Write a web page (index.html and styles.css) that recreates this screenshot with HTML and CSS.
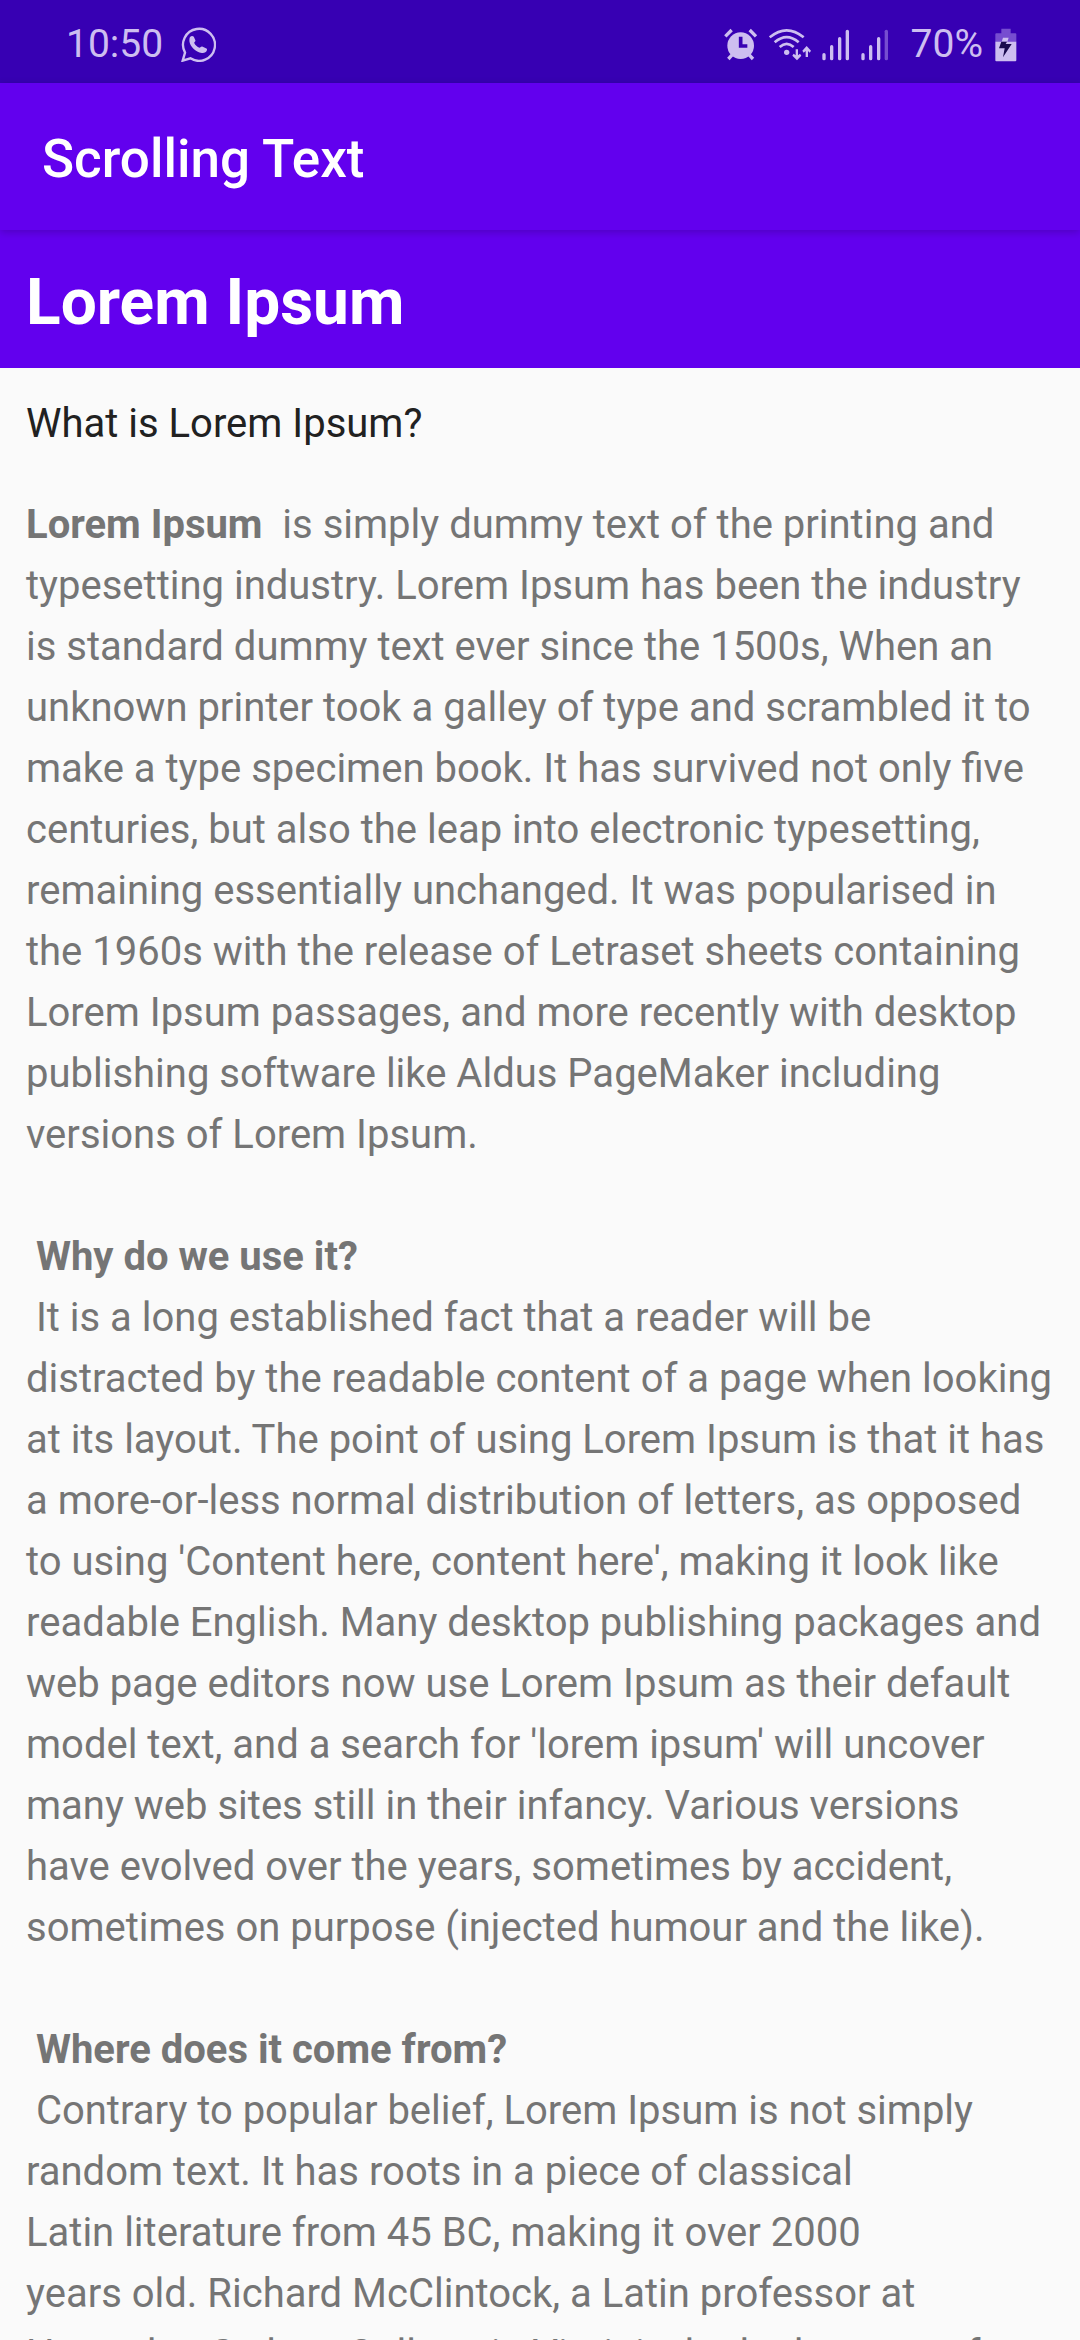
FILE: index.html
```html
<!DOCTYPE html>
<html lang="en">
<head>
<meta charset="utf-8">
<meta name="viewport" content="width=device-width, initial-scale=1">
<title>Scrolling Text</title>
<link rel="stylesheet" href="styles.css">
</head>
<body>
<div class="app">
  <div class="status-bar">
    <div class="status-group">
      <span>10:50</span>
      <svg class="icon-chat" viewBox="0 0 104 104" width="35" height="35" aria-label="WhatsApp">
        <path d="M5 100 L12 76 A47.500 47.500 0 1 1 28 93 Z" fill="none" stroke="currentColor" stroke-width="7" stroke-linejoin="miter"/>
        <path d="M27 30c3-4 8-4 11-1l5 11c0 3-3 5-4 7 3 7 9 12 16 15 3-2 5-5 8-4l11 5c3 1 4 3 3 6-2 6-8 9-15 8C43 74 27 58 25 42c0-5 0-9 2-12z" fill="currentColor"/>
      </svg>
    </div>
    <div class="status-group">
      <svg viewBox="0 0 102 102" width="34" height="34" aria-label="Alarm">
        <circle cx="50" cy="53" r="40" fill="currentColor"/>
        <path d="M4 25 L23 6 M96 25 L77 6" stroke="currentColor" stroke-width="10"/>
        <path d="M25 80 L13 93 M75 80 L87 93" stroke="currentColor" stroke-width="10"/>
        <path d="M50 26 V54 H70" fill="none" stroke="#3700b3" stroke-width="11"/>
      </svg>
      <svg class="icon-wifi" viewBox="0 0 126 102" width="42" height="34" aria-label="Wi-Fi">
        <g fill="none" stroke="currentColor" stroke-width="8">
          <path d="M2 28 Q53 -14 104 28"/>
          <path d="M17 43 Q53 12 89 43"/>
          <path d="M32 57 Q53 38 74 57"/>
        </g>
        <circle cx="53" cy="73" r="8" fill="currentColor"/>
        <path d="M80 64h7v18l6-5 4 6-13 14-14-14 4-6 6 5zM110 87h7V69l5 5 4-6-13-14-13 14 4 6 6-5z" fill="currentColor"/>
      </svg>
      <svg class="icon-signal" viewBox="0 0 84 102" width="28" height="34" aria-label="Signal, SIM 1">
        <path d="M6 80V92M29 56V92M53 32V92M76 10V92" stroke="currentColor" stroke-width="10" stroke-linecap="round"/>
      </svg>
      <svg class="icon-signal" viewBox="0 0 84 102" width="28" height="34" aria-label="Signal, SIM 2">
        <path d="M6 80V92M29 56V92M53 32V92" stroke="currentColor" stroke-width="10" stroke-linecap="round"/>
        <path d="M76 10V92" stroke="#764dd0" stroke-width="10" stroke-linecap="round"/>
      </svg>
      <span class="battery-level">70%</span>
      <svg class="icon-battery" viewBox="0 0 66 102" width="22" height="34" aria-label="Battery charging">
        <path d="M19 2H47V16H61Q64 16 64 19V42H1V19Q1 16 4 16H19Z" fill="#764dd0"/>
        <path d="M1 41H64V97Q64 100 61 100H4Q1 100 1 97Z" fill="currentColor"/>
        <path d="M24 29H41L37 41H20Z" fill="currentColor"/>
        <path d="M19 41H36L32 48H50L24 88L29 61H12Z" fill="#1a0b4d"/>
      </svg>
    </div>
  </div>
  <header class="app-bar">Scrolling Text</header>
  <h1 class="article-title">Lorem Ipsum</h1>
  <main class="article">
    <h2 class="article-subtitle">What is Lorem Ipsum?</h2>
    <p><b>Lorem Ipsum&nbsp;</b> is simply dummy text of the printing and typesetting industry. Lorem Ipsum has been the industry is standard dummy text ever since the 1500s, When an unknown printer took a galley of type and scrambled it to make a type specimen book. It has survived not only five centuries, but also the leap into electronic typesetting, remaining essentially unchanged. It was popularised in the 1960s with the release of Letraset sheets containing Lorem Ipsum passages, and more recently with desktop publishing software like Aldus PageMaker including versions of Lorem Ipsum.</p>
    <p>&nbsp;<b>Why do we use it?</b><br>&nbsp;It is a long established fact that a reader will be distracted by the readable content of a page when looking at its layout. The point of using Lorem Ipsum is that it has a more-or-less normal distribution of letters, as opposed to using 'Content here, content here', making it look like readable English. Many desktop publishing packages and web page editors now use Lorem Ipsum as their default model text, and a search for 'lorem ipsum' will uncover many web sites still in their infancy. Various versions<br>have evolved over the years, sometimes by accident, sometimes on purpose (injected humour and the like).</p>
    <p>&nbsp;<b>Where does it come from?</b><br>&nbsp;Contrary to popular belief, Lorem Ipsum is not simply random text. It has roots in a piece of classical<br>Latin literature from 45 BC, making it over 2000<br>years old. Richard McClintock, a Latin professor at<br>Hampden-Sydney College in Virginia, looked up one of</p>
  </main>
</div>
</body>
</html>
```
FILE: styles.css
```css
* {
  box-sizing: border-box;
}

body {
  margin: 0;
  background: #fafafa;
  font-family: Roboto, "Liberation Sans", sans-serif;
}

.app {
  display: flex;
  flex-direction: column;
  height: 100vh;
}

.status-bar {
  display: flex;
  justify-content: space-between;
  align-items: center;
  flex: none;
  padding: 21px 63px 15px 66px;
  background: #3700b3;
  color: #cdbef0;
  font-size: 39px;
  line-height: 47px;
}

.status-group {
  display: flex;
  align-items: center;
}

.status-group svg {
  flex: none;
}

.icon-chat {
  margin-left: 18px;
}

.icon-wifi,
.icon-signal {
  margin-left: 11px;
}

.battery-level {
  margin-left: 22px;
}

.icon-battery {
  margin-left: 12px;
}

.app-bar {
  z-index: 1;
  flex: none;
  padding: 45px 42px 39px;
  background: #6200ee;
  box-shadow: 0 2px 8px rgba(0, 0, 0, 0.2);
  color: #fff;
  font-size: 53px;
  font-weight: 500;
  line-height: 63px;
}

.article-title {
  flex: none;
  margin: 0;
  padding: 30px 26px 22px;
  background: #6200ee;
  color: #fff;
  font-size: 64px;
  font-weight: 700;
  line-height: 86px;
}

.article {
  flex: 1;
  min-height: 0;
  overflow-y: auto;
  scrollbar-width: none;
  padding: 25px 22px 26px 26px;
  color: #757575;
  font-size: 40px;
  line-height: 61px;
}

.article-subtitle {
  margin: 0 0 40px;
  color: #212121;
  font-size: 40px;
  font-weight: 400;
  line-height: 61px;
}

.article p {
  margin: 0 0 61px;
}
```
